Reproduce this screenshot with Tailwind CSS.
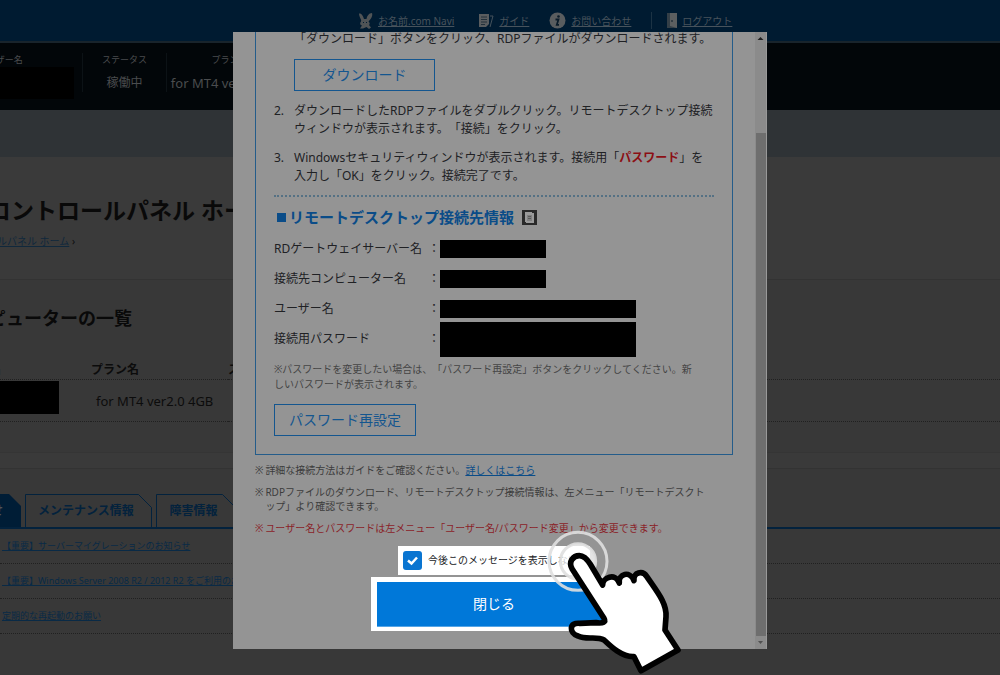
<!DOCTYPE html>
<html lang="ja">
<head>
<meta charset="utf-8">
<title>コントロールパネル ホーム</title>
<script src="https://cdn.jsdelivr.net/npm/@tailwindcss/browser@4"></script>
</head>
<body class="relative min-h-screen overflow-hidden bg-[#383838] font-['Noto_Sans','Noto_Sans_CJK_JP',sans-serif] text-xs text-[#0c0c0c] [text-spacing-trim:space-all]">

<!-- Page behind the dialog -->
<header class="flex h-[43px] items-center border-b-2 border-[#19242c] bg-[#001b31] pl-[358px] text-[10px] leading-4 text-[#48535c]">
  <nav class="flex items-center">
    <a href="#" class="flex items-center gap-[5px]">
      <svg class="h-[18px] w-[15px]" viewBox="0 0 15 18" fill="#505456"><path d="M1 1.500C3 1 5 3 6 7L8.500 7C9 4 11 1 14 1C15 4 13 7 10.500 9.500C12 11 12 12 11 13L13 15.500L11 17L8.500 15L5 16.500L2 16.500L4 13.500C2 13 1.500 11 3 9.500C4 8 1 5 1 1.500Z"/><path d="M5 10h1v1H5zM8 10h1v1H8z" fill="#001b31"/></svg>
      <span class="underline">お名前.com Navi</span></a>
    <a href="#" class="ml-6 flex items-center gap-[5px]">
      <svg class="h-4 w-4" viewBox="0 0 16 16"><path d="M1 1h10v10l-3 3H1z" fill="#5a5d5f"/><path d="M3 4h6M3 6.500h6M3 9h6M3 11.500h4" stroke="#22303a"/><path d="M12 3l3 0-3 11" fill="none" stroke="#44515b"/></svg>
      <span class="underline">ガイド</span></a>
    <a href="#" class="ml-5 flex items-center gap-[5px]">
      <svg class="h-[17px] w-[17px]" viewBox="0 0 17 17"><circle cx="8.500" cy="8.500" r="8" fill="#5a5d5f"/><circle cx="9.500" cy="4.500" r="1.300" fill="#0a1b29"/><path d="M6.500 7.500H9.500L7.800 12.800H10" fill="none" stroke="#0a1b29" stroke-width="1.800"/></svg>
      <span class="underline">お問い合わせ</span></a>
    <a href="#" class="ml-5 flex items-center gap-[5px] border-l border-[#1c3344] pl-[15px]">
      <svg class="h-[17px] w-[10px]" viewBox="0 0 10 17"><path d="M0 1h10v15H0z" fill="#343f47"/><path d="M3 1h7v15l-7-2z" fill="#5c5f60"/><circle cx="5" cy="9" r="1" fill="#26323b"/></svg>
      <span class="underline">ログアウト</span></a>
  </nav>
</header>

<section class="flex h-[67px] items-start bg-[#020609] pt-[10px] text-[#4a4c4e]">
  <div class="w-[82px]">
    <p class="-ml-[22px] text-[9px] leading-[14px]">ユーザー名</p>
    <div class="h-8 w-[74px] bg-black"></div>
  </div>
  <div class="flex">
    <div class="w-[84px] border-l border-[#0c1216] text-center"><p class="text-[9px] leading-[14px]">ステータス</p><p class="mt-[7px] leading-[18px]">稼働中</p></div>
    <div class="w-[126px] whitespace-nowrap border-l border-[#0c1216] text-center"><p class="text-[9px] leading-[14px]">プラン名</p><p class="mt-[7px] text-[13px] leading-[18px]">for MT4 ver2.0 4GB</p></div>
  </div>
</section>
<div class="h-[47px] bg-[#2f3336]"></div>

<main>
  <section class="h-[123px] border-b border-[#333] bg-[#3a3a3a] pt-9">
    <h1 class="-ml-3 text-[23px] font-bold leading-[34px] text-[#090909]">コントロールパネル ホーム</h1>
    <p class="-ml-[53px] mt-[6px] text-[10px] leading-4"><a href="#" class="text-[#10283c] underline">コントロールパネル ホーム</a> ›</p>
  </section>

  <section class="h-[173px] border-b border-[#353535] pt-6">
    <h2 class="-ml-12 text-lg font-bold leading-7 text-[#090909]">コンピューターの一覧</h2>
    <table class="mt-[29px] w-full text-left leading-[18px]">
      <thead><tr class="border-b border-dotted border-[#202020]">
        <th class="w-[91px]"><span class="-ml-[95px]">コンピューター名</span></th><th class="w-[137px]">プラン名</th><th>ステータス</th></tr></thead>
      <tbody><tr class="h-[42px] border-b border-dotted border-[#202020]">
        <td class="align-top"><div class="mt-px h-[33px] w-[59px] bg-black"></div></td><td class="pl-[5px] text-[13px]">for MT4 ver2.0 4GB</td><td></td></tr></tbody>
    </table>
  </section>
  <div class="h-4 border-b border-[#333] bg-[#3a3a3a]"></div>

  <section class="pt-[25px]">
    <div class="flex h-[35px] items-end border-b-2 border-[#03223d] font-bold text-[#03223d]">
      <button class="relative h-[33px] w-[21px] text-[#505356]"><svg class="absolute inset-0" width="21" height="33"><path d="M0 0H9L21 12V33H0Z" fill="#001d36"/></svg><span class="absolute top-2 right-[18px] whitespace-nowrap leading-[18px]">お知らせ</span></button>
      <button class="relative ml-1 h-[33px] w-[127px] pr-[5px]"><svg class="absolute inset-0" width="127" height="33"><path d="M.5 33V.5H113.500L126.500 13.500V33" fill="none" stroke="#03223d"/></svg>メンテナンス情報</button>
      <button class="relative ml-1 h-[33px] w-[80px] pr-[5px]"><svg class="absolute inset-0" width="80" height="33"><path d="M.5 33V.5H66.500L79.500 13.500V33" fill="none" stroke="#03223d"/></svg>障害情報</button>
    </div>
    <ul class="text-[9px] leading-[34px] text-[#092a46]">
      <li class="border-b border-dotted border-[#202020] pl-[2px]"><a href="#" class="underline">【重要】サーバーマイグレーションのお知らせ</a></li>
      <li class="border-b border-dotted border-[#202020] pl-[2px]"><a href="#" class="underline">【重要】Windows Server 2008 R2 / 2012 R2 をご利用のお客様へ</a></li>
      <li class="border-b border-dotted border-[#202020] pl-[2px]"><a href="#" class="underline">定期的な再起動のお願い</a></li>
    </ul>
  </section>
</main>

<!-- Dialog -->
<div class="absolute inset-x-0 top-8 flex justify-center">
  <div role="dialog" class="relative flex w-[534px] bg-[#949494] text-[#202124]">
    <div class="flex-1 overflow-hidden px-[22px] pb-[18px]">
      <div class="border border-t-0 border-[#245c8a] px-[18px] pb-[18px]">
        <ol class="-mt-[2px] leading-[18px]">
          <li class="pl-[20px]">
            <p class="whitespace-nowrap">「ダウンロード」ボタンをクリック、RDPファイルがダウンロードされます。</p>
            <button class="mt-[11px] h-8 w-[141px] border border-[#14568f] text-sm text-[#14568f]">ダウンロード</button>
          </li>
          <li class="mt-[11px] flex"><span class="w-5">2.</span><p class="whitespace-nowrap">ダウンロードしたRDPファイルをダブルクリック。リモートデスクトップ接続<br>ウィンドウが表示されます。「接続」をクリック。</p></li>
          <li class="mt-[11px] flex"><span class="w-5">3.</span><p class="whitespace-nowrap">Windowsセキュリティウィンドウが表示されます。接続用「<strong class="text-[#8c0f14]">パスワード</strong>」を<br>入力し「OK」をクリック。接続完了です。</p></li>
        </ol>
        <div class="mt-[10px] border-t-2 border-dotted border-[#557184]"></div>
        <h3 class="mt-2 flex items-center text-[15px] font-bold leading-6 text-[#0a4c88]">
          <span class="ml-[3px] mr-[3px] h-[9px] w-[9px] bg-[#0a4c88]"></span>リモートデスクトップ接続先情報
          <svg class="ml-2 h-[15px] w-[15px]" viewBox="0 0 15 15"><path d="M0 0h15v15H0z" fill="#292929"/><path d="M3 2h7v1h2v10H4V12H3z" fill="#9a9a9a"/><path d="M5 5h5v6H5z" fill="#808080"/><path d="M6 6.500h3M6 8.500h3" stroke="#5a5a5a"/></svg>
        </h3>
        <dl class="mt-[5px]">
          <div class="flex h-[30px] items-center"><dt class="w-[154px]">RDゲートウェイサーバー名</dt><dd class="flex items-center"><span class="w-3">：</span><span class="h-[18px] w-[106px] bg-black"></span></dd></div>
          <div class="flex h-[30px] items-center"><dt class="w-[154px]">接続先コンピューター名</dt><dd class="flex items-center"><span class="w-3">：</span><span class="h-[18px] w-[106px] bg-black"></span></dd></div>
          <div class="flex h-[30px] items-center"><dt class="w-[154px]">ユーザー名</dt><dd class="flex items-center"><span class="w-3">：</span><span class="h-[18px] w-[196px] bg-black"></span></dd></div>
          <div class="flex h-[30px] items-center"><dt class="w-[154px]">接続用パスワード</dt><dd class="flex items-center"><span class="w-3">：</span><span class="h-[35px] w-[196px] bg-black"></span></dd></div>
        </dl>
        <p class="mt-2 whitespace-nowrap text-[10px] leading-[15px] text-[#444]">※パスワードを変更したい場合は、「パスワード再設定」ボタンをクリックしてください。新<br>しいパスワードが表示されます。</p>
        <button class="mt-3 block h-8 w-[142px] border border-[#14568f] text-sm text-[#14568f]">パスワード再設定</button>
      </div>
      <ul class="mt-2 flex flex-col gap-2 whitespace-nowrap text-[10px] leading-[14px] text-[#3c3c3c]">
        <li class="flex gap-[2px]"><span>※</span><p>詳細な接続方法はガイドをご確認ください。<a href="#" class="text-[#0a4c88] underline">詳しくはこちら</a></p></li>
        <li class="flex gap-[2px]"><span>※</span><p>RDPファイルのダウンロード、リモートデスクトップ接続情報は、左メニュー「リモートデスクト<br>ップ」より確認できます。</p></li>
        <li class="flex gap-[2px] text-[#8a2228]"><span>※</span><p>ユーザー名とパスワードは左メニュー「ユーザー名/パスワード変更」から変更できます。</p></li>
      </ul>
      <label class="mx-auto mt-[11px] flex h-[29px] w-48 items-center gap-[6px] bg-white pl-[5px] text-[10px]">
        <span class="relative flex"><input type="checkbox" checked class="h-[19px] w-[19px] appearance-none rounded-[3px] bg-[#0a75d1]"><svg class="pointer-events-none absolute inset-0" width="19" height="19" fill="none" stroke="white" stroke-width="2.500"><path d="M5 9.500 8.500 12.500 14 6.500"/></svg></span>
        今後このメッセージを表示しない</label>
      <div class="mx-auto mt-[2px] w-[246px] bg-white px-[6px] pt-[5px] pb-1">
        <button class="block h-[45px] w-full border-b border-[#55a5e6] bg-[#0078d9] text-sm text-white">閉じる</button>
      </div>
    </div>
    <div class="flex w-3 flex-col items-center border-r border-[#999] bg-[#8b8b8b]">
      <svg class="h-[11px] w-[11px]" viewBox="0 0 11 11"><path d="M2.500 8 5.500 5 8.500 8Z" fill="#202020"/></svg>
      <div class="mt-[90px] w-[10px] flex-1 bg-[#6e6e6e]"></div>
      <svg class="h-[13px] w-[11px]" viewBox="0 0 11 13"><path d="M3 5H8L5.500 8Z" fill="#505050"/></svg>
    </div>

    <!-- Click marker and pointing hand, floating over the dialog -->
    <svg class="pointer-events-none absolute top-[468px] left-[297px] h-[175px] w-[240px]" viewBox="0 0 720 525">
      <g fill="none" stroke="#dfdfdf" stroke-opacity=".9" stroke-width="9"><circle cx="144" cy="184" r="87"/><circle cx="144" cy="184" r="53" fill="#fff" fill-opacity=".75"/></g>
      <path d="M127 208C113 185 130 167 148 167C164 167 173 180 181 193L218 255C217 234 256 216 268 249C264 221 300 211 312 242C309 216 338 211 350 229C382 276 411 310 408 350L405 390L444 450L333 512L312 470C276 472 243 440 222 420C200 407 170 421 144 408C116 398 117 366 150 370L198 368C220 371 228 366 222 355Z" fill="#fff" stroke="#000" stroke-width="17" stroke-linejoin="round"/>
    </svg>
  </div>
</div>
</body>
</html>
